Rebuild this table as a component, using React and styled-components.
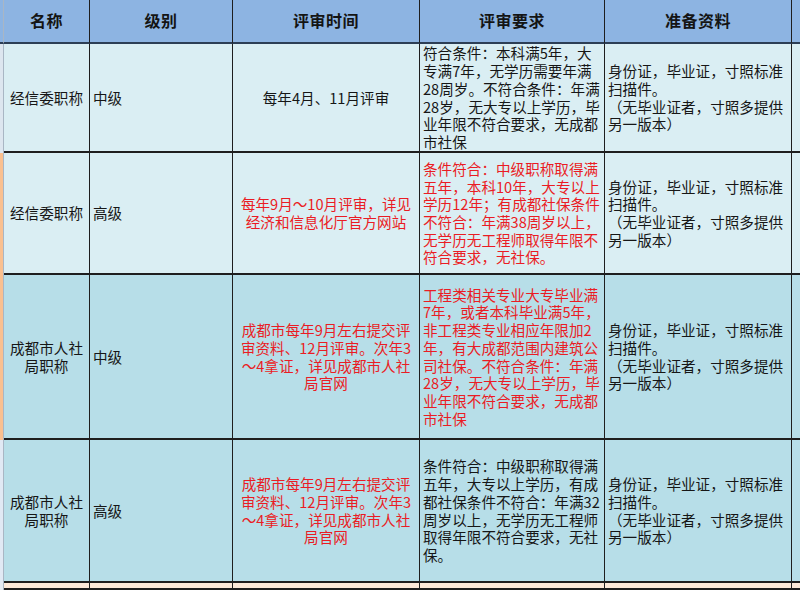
import React from "react";
import styled, {createGlobalStyle} from "styled-components";

const GlobalStyle = createGlobalStyle`
  html, body {
    margin: 0;
    padding: 0;
    background: #fff;
    overflow: hidden;
  }
  body {
    font-family: "Noto Sans CJK SC", "Noto Sans", sans-serif;
  }
`;

const LINE = "#1e1e1e";
const HEAD_BG = "#8db4e2";
const RED = "#ea1c24";

export const Sheet = styled.div`
  width: 800px;
  height: 590px;
  display: grid;
  grid-template-columns: 4px 86px 143px 187px 185px 187px 8px;
  grid-template-rows: 44px 109px 122px 165px 143px 7px;
  overflow: hidden;
  color: #161616;
`;

export const Cell = styled.div`
  box-sizing: border-box;
  background: ${(p) => p.$bg};
  border-right: 1px solid ${LINE};
  border-bottom: 2px solid ${LINE};
  display: flex;
  align-items: center;
  justify-content: ${(p) => (p.$align === "center" ? "center" : "flex-start")};
  text-align: ${(p) => p.$align || "left"};
  padding: 0 ${(p) => (p.$align === "center" ? "0" : "3px")};
  font-size: 14.6px;
  line-height: 17.7px;
  color: ${(p) => (p.$red ? RED : "#161616")};
  white-space: nowrap;
  overflow: hidden;
`;

export const HeadCell = styled(Cell)`
  background: ${HEAD_BG};
  border-bottom-color: #2c3e55;
  justify-content: center;
  font-size: 16px;
  font-weight: 700;
  color: #141414;
  letter-spacing: 0.5px;
`;

export const Strip = styled.div`
  box-sizing: border-box;
  background: ${(p) => p.$bg};
  border-right: 1px solid #a9b6c4;
  border-bottom: ${(p) => (p.$head ? `2px solid #2c3e55` : "none")};
`;

export const Edge = styled.div`
  box-sizing: border-box;
  background: ${(p) => p.$bg};
  border-bottom: 2px solid ${(p) => (p.$head ? "#2c3e55" : LINE)};
`;

const Lines = ({lines}) => (
  <div>
    {lines.map((l, i) => (
      <div key={i}>{l}</div>
    ))}
  </div>
);

const DOCS = [
  "身份证，毕业证，寸照标准",
  "扫描件。",
  "（无毕业证者，寸照多提供",
  "另一版本）",
];

const CITY_TIME = [
  "成都市每年9月左右提交评",
  "审资料、12月评审。次年3",
  "～4拿证，详见成都市人社",
  "局官网",
];

const rows = [
  {
    bg: "#daeef3",
    strip: "#dde6ef",
    name: ["经信委职称"],
    level: "中级",
    time: {red: false, lines: ["每年4月、11月评审"]},
    req: {
      red: false,
      lines: [
        "符合条件：本科满5年，大",
        "专满7年，无学历需要年满",
        "28周岁。不符合条件：年满",
        "28岁，无大专以上学历，毕",
        "业年限不符合要求，无成都",
        "市社保",
      ],
    },
  },
  {
    bg: "#daeef3",
    strip: "#fac08f",
    name: ["经信委职称"],
    level: "高级",
    time: {red: true, lines: ["每年9月～10月评审，详见", "经济和信息化厅官方网站"]},
    req: {
      red: true,
      lines: [
        "条件符合：中级职称取得满",
        "五年，本科10年，大专以上",
        "学历12年；有成都社保条件",
        "不符合：年满38周岁以上，",
        "无学历无工程师取得年限不",
        "符合要求，无社保。",
      ],
    },
  },
  {
    bg: "#b7dee8",
    strip: "#fac08f",
    name: ["成都市人社", "局职称"],
    level: "中级",
    time: {red: true, lines: CITY_TIME},
    req: {
      red: true,
      lines: [
        "工程类相关专业大专毕业满",
        "7年，或者本科毕业满5年，",
        "非工程类专业相应年限加2",
        "年，有大成都范围内建筑公",
        "司社保。不符合条件：年满",
        "28岁，无大专以上学历，毕",
        "业年限不符合要求，无成都",
        "市社保",
      ],
    },
  },
  {
    bg: "#b7dee8",
    strip: "#e1e9f4",
    name: ["成都市人社", "局职称"],
    level: "高级",
    time: {red: true, lines: CITY_TIME},
    req: {
      red: false,
      lines: [
        "条件符合：中级职称取得满",
        "五年，大专以上学历，有成",
        "都社保条件不符合：年满32",
        "周岁以上，无学历无工程师",
        "取得年限不符合要求，无社",
        "保。",
      ],
    },
  },
];

const HEADERS = ["名称", "级别", "评审时间", "评审要求", "准备资料"];

export default function App() {
  return (
    <>
      <GlobalStyle />
      <Sheet>
        <Strip $bg={HEAD_BG} $head />
        {HEADERS.map((h) => (
          <HeadCell key={h}>{h}</HeadCell>
        ))}
        <Edge $bg={HEAD_BG} $head />

        {rows.map((r, i) => (
          <React.Fragment key={i}>
            <Strip $bg={r.strip} />
            <Cell $bg={r.bg} $align="center">
              <Lines lines={r.name} />
            </Cell>
            <Cell $bg={r.bg}>{r.level}</Cell>
            <Cell $bg={r.bg} $align="center" $red={r.time.red}>
              <Lines lines={r.time.lines} />
            </Cell>
            <Cell $bg={r.bg} $red={r.req.red}>
              <Lines lines={r.req.lines} />
            </Cell>
            <Cell $bg={r.bg}>
              <Lines lines={DOCS} />
            </Cell>
            <Edge $bg={r.bg} />
          </React.Fragment>
        ))}

        <Strip $bg="#e4ebf3" />
        {HEADERS.map((h) => (
          <Cell key={h} $bg="#fde9d9" />
        ))}
        <Edge $bg="#fde9d9" />
      </Sheet>
    </>
  );
}
